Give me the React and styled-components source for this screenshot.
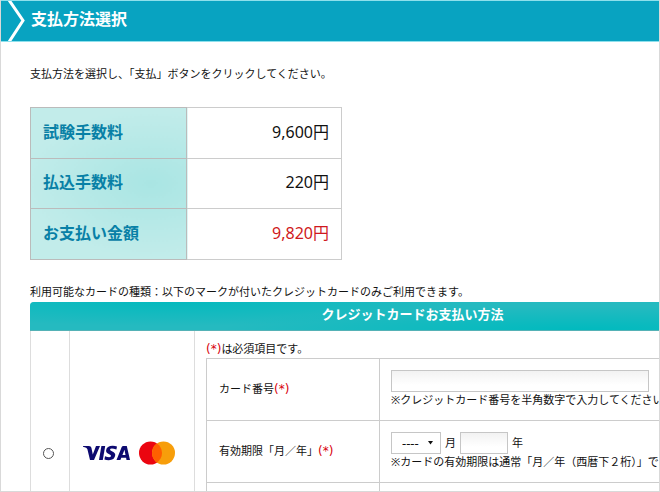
import React from 'react';
import styled, { createGlobalStyle } from 'styled-components';

const GlobalStyle = createGlobalStyle`
  * {
    box-sizing: border-box;
  }

  body {
    margin: 0;
    background: #fff;
    color: #111;
    font-family: 'Noto Sans', 'Noto Sans CJK JP', sans-serif;
    font-size: 11px;
    line-height: 16px;
  }

  input, select {
    font: inherit;
    color: inherit;
  }
`;

const Page = styled.div`
  height: 100vh;
  overflow: hidden;
  border: 1px solid #d9d9d9;
  border-top: 0;
`;

const Header = styled.header`
  display: flex;
  align-items: center;
  height: 42px;
  padding-left: 7px;
  background: #08a3c1;
  border-top: 1px solid #8ee0ec;
  border-bottom: 1px solid #8ee0ec;
`;

const Chevron = styled.svg`
  width: 18px;
  height: 40px;
`;

const PageTitle = styled.h1`
  margin: 0 0 4px 5px;
  color: #fff;
  font-size: 16px;
  line-height: 24px;
`;

const Main = styled.main`
  padding: 24px 0 0 29px;
`;

const Text = styled.p`
  margin: 0;
  white-space: nowrap;
`;

// Tableau des montants
const FeeTable = styled.table`
  width: 312px;
  height: 153px;
  margin: 25px 0 24px;
  border-collapse: collapse;
  font-size: 16px;
  line-height: 24px;
  background:
    linear-gradient(to right, transparent 157px, #fff 157px),
    radial-gradient(ellipse 130px 75px at 120px 76px, #a9e5e3, #c2ecea);
`;

const FeeLabel = styled.th`
  width: 156px;
  height: 50px;
  padding: 0 12px 2px;
  border: 1px solid #bbb;
  color: #0880a6;
  text-align: left;
`;

const FeeValue = styled.td`
  padding: 0 12px 2px;
  border: 1px solid #ccc;
  color: ${props => (props.$total ? '#cf1820' : '#111')};
  text-align: right;
`;

// Tableau des moyens de paiement
const PaymentTable = styled.table`
  width: 100%;
  min-width: 765px;
  margin-top: 2px;
  border-spacing: 0;
`;

const PaymentHead = styled.th`
  height: 29px;
  padding: 0 0 4px;
  border-bottom: 1px solid #55b2b6;
  border-radius: 4px 4px 0 0;
  color: #fff;
  font-size: 13px;
  line-height: 20px;
  background:
    radial-gradient(ellipse 300px 24px at 18% 0, #04babe, transparent),
    radial-gradient(ellipse 360px 24px at 72% 100%, #00babe, transparent),
    #25bac0;
`;

const PaymentCell = styled.td`
  width: ${props => props.$width || 'auto'};
  height: 244px;
  padding: 0 4px 0 0;
  border-left: 1px solid #ddd;
  text-align: center;
  vertical-align: middle;
`;

const FormCell = styled(PaymentCell)`
  padding: 10px 0 0 11px;
  text-align: left;
  vertical-align: top;
`;

const Radio = styled.input`
  appearance: none;
  display: block;
  width: 11px;
  height: 11px;
  margin: 0 auto;
  border: 1px solid #555;
  border-radius: 50%;
  background: #fff;

  &:checked {
    background: #555;
    box-shadow: inset 0 0 0 2px #fff;
  }
`;

const Brands = styled.label`
  display: flex;
  justify-content: flex-start;
  align-items: center;
  gap: 8px;
  padding-left: 13px;
`;

const Required = styled.span`
  color: #d8000c;
  font-family: 'DejaVu Sans', sans-serif;
  font-size: 12px;
`;

const FormTable = styled.table`
  width: 100%;
  margin-top: 1px;
  border-collapse: collapse;
`;

const FormLabel = styled.th`
  width: 173px;
  height: 62px;
  padding: 0 12px 2px;
  border: 1px solid #ccc;
  font-weight: normal;
  text-align: left;
`;

const FormValue = styled.td`
  padding: 0 11px 2px;
  border: 1px solid #ccc;
`;

const Field = styled.input`
  display: block;
  width: ${props => props.$width};
  height: 22px;
  padding: 0 4px;
  border: 1px solid #c6c6c6;
  background: linear-gradient(#f2f2f2, #fff 70%);
`;

const Expiry = styled.div`
  display: flex;
  align-items: center;
  gap: 4px;
`;

const SelectBox = styled.div`
  position: relative;
  width: 50px;

  svg {
    position: absolute;
    top: 9px;
    right: 8px;
    pointer-events: none;
  }
`;

const Select = styled.select`
  appearance: none;
  display: block;
  width: 100%;
  height: 22px;
  padding: 0 0 0 10px;
  border: 1px solid #c6c6c6;
  border-radius: 0;
  background: #fff;
  font-size: 13px;
`;

const fees = [
	{ label: '試験手数料', value: '9,600円' },
	{ label: '払込手数料', value: '220円' },
	{ label: 'お支払い金額', value: '9,820円', total: true },
];

const months = ['01', '02', '03', '04', '05', '06', '07', '08', '09', '10', '11', '12'];

const VisaLogo = () => (
	<svg width="48" height="16" viewBox="0 0 48 16" role="img" aria-label="VISA" fill="#0d0a70">
		<path d="M0 1H6Q8 1 8.4 2.8L9.8 9.5L13 1H17L11 15H7L4.4 4.3Q4.1 3.2 3.1 2.7Q1.8 2 0 1.7Z" />
		<path d="M18.4 1H22.2L19.8 15H16Z" />
		<path d="M34 1.4L33.4 4.5Q27.2 2.5 27 4.8Q27 5.5 29.4 6.6Q32.5 8 32.2 10.3Q31.7 15.2 25.7 15.2Q23.2 15.2 21.4 14.5L22 11.3Q27.8 13.3 28.1 11.1Q28.1 10.1 25.8 9.1Q22.8 7.8 23.1 5.3Q23.7.8 29.7.8Q32.2.8 34 1.4Z" />
		<path fillRule="evenodd" d="M40.2 1H43.8L47 15H43.5L43.1 12.8H38.3L37.4 15H33.5L38.7 2.1Q39.2 1 40.2 1ZM39.4 9.9H42.5L41.5 4.7Z" />
	</svg>
);

const MastercardLogo = () => (
	<svg width="36" height="24" viewBox="0 0 36 24" role="img" aria-label="Mastercard">
		<circle cx="11.5" cy="12" r="11.5" fill="#eb0510" />
		<circle cx="24.5" cy="12" r="11.5" fill="#f79e0b" />
		<path d="M18 2.5A11.5 11.5 0 0 1 18 21.5A11.5 11.5 0 0 1 18 2.5Z" fill="#ff5f00" />
	</svg>
);

const App = () => {
	return (
		<Page>
			<GlobalStyle />
			<Header>
				<Chevron viewBox="0 0 18 40" fill="none" stroke="#fff" strokeWidth="3" aria-hidden="true">
					<path d="M1-1L15 19.5L1 41" />
				</Chevron>
				<PageTitle>支払方法選択</PageTitle>
			</Header>
			<Main>
				<Text>支払方法を選択し、「支払」ボタンをクリックしてください。</Text>
				<FeeTable>
					<tbody>
						{fees.map(fee => (
							<tr key={fee.label}>
								<FeeLabel scope="row">{fee.label}</FeeLabel>
								<FeeValue $total={fee.total}>{fee.value}</FeeValue>
							</tr>
						))}
					</tbody>
				</FeeTable>
				<Text>利用可能なカードの種類&#xFF1A;以下のマークが付いたクレジットカードのみご利用できます。</Text>
				<PaymentTable>
					<thead>
						<tr>
							<PaymentHead colSpan={3}>クレジットカードお支払い方法</PaymentHead>
						</tr>
					</thead>
					<tbody>
						<tr>
							<PaymentCell $width="39px">
								<Radio type="radio" name="brand" id="credit" />
							</PaymentCell>
							<PaymentCell $width="125px">
								<Brands htmlFor="credit">
									<VisaLogo />
									<MastercardLogo />
								</Brands>
							</PaymentCell>
							<FormCell>
								<Text><Required>(*)</Required>は必須項目です。</Text>
								<FormTable>
									<tbody>
										<tr>
											<FormLabel scope="row">
												<label htmlFor="number">カード番号</label><Required>(*)</Required>
											</FormLabel>
											<FormValue>
												<Field id="number" type="text" $width="258px" />
												<Text>※クレジットカード番号を半角数字で入力してください</Text>
											</FormValue>
										</tr>
										<tr>
											<FormLabel scope="row">有効期限「月&#xFF0F;年」<Required>(*)</Required></FormLabel>
											<FormValue>
												<Expiry>
													<SelectBox>
														<Select id="month" defaultValue="">
															<option value="">----</option>
															{months.map(month => <option key={month}>{month}</option>)}
														</Select>
														<svg width="5" height="4" viewBox="0 0 5 4" aria-hidden="true">
															<path d="M0 0H5L2.5 3.5Z" fill="#111" />
														</svg>
													</SelectBox>
													<label htmlFor="month">月</label>
													<Field id="year" type="text" $width="48px" />
													<label htmlFor="year">年</label>
												</Expiry>
												<Text>※カードの有効期限は通常「月&#xFF0F;年&#xFF08;西暦下&#xFF12;桁&#xFF09;」で</Text>
											</FormValue>
										</tr>
										<tr>
											<FormLabel scope="row" />
											<FormValue />
										</tr>
									</tbody>
								</FormTable>
							</FormCell>
						</tr>
					</tbody>
				</PaymentTable>
			</Main>
		</Page>
	);
};

export default App;
